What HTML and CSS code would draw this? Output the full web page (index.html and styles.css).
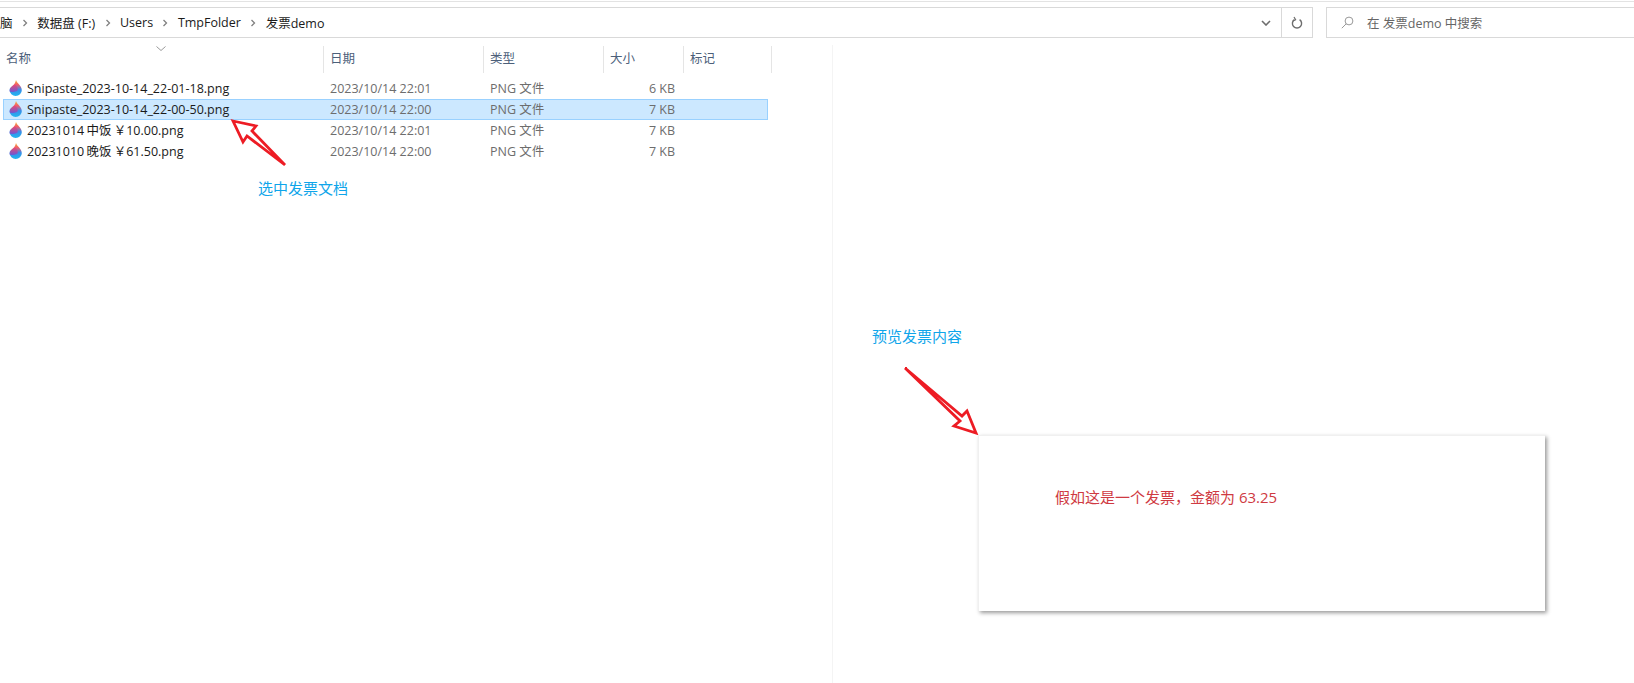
FILE: index.html
```html
<!DOCTYPE html>
<html lang="zh-CN">
<head>
  <meta charset="UTF-8">
  <title>发票demo</title>
  <link rel="stylesheet" href="styles.css">
</head>
<body>

  <div class="top-line"></div>

  <div class="toolbar">
    <div class="address-bar">
      <div class="crumbs">
        <span class="crumb crumb-cut">脑</span>
        <svg class="sep" viewBox="0 0 6 8"><path d="M1.5 1l3 3-3 3" /></svg>
        <span class="crumb">数据盘 (F:)</span>
        <svg class="sep" viewBox="0 0 6 8"><path d="M1.5 1l3 3-3 3" /></svg>
        <span class="crumb">Users</span>
        <svg class="sep" viewBox="0 0 6 8"><path d="M1.5 1l3 3-3 3" /></svg>
        <span class="crumb">TmpFolder</span>
        <svg class="sep" viewBox="0 0 6 8"><path d="M1.5 1l3 3-3 3" /></svg>
        <span class="crumb">发票demo</span>
      </div>
      <div class="bar-btn dropdown-btn">
        <svg width="10" height="6" viewBox="0 0 10 6"><path d="M1 1l4 4 4-4" fill="none" stroke="#6d6d6d" stroke-width="1.6" /></svg>
      </div>
      <div class="bar-btn refresh-btn">
        <svg width="12" height="14" viewBox="0 0 12 14"><path d="M3.4 3.6A4.6 4.6 0 1 0 8.6 3.6" fill="none" stroke="#6d6d6d" stroke-width="1.4" /><path d="M3 1l1.6 2.8L2 5" fill="none" stroke="#6d6d6d" stroke-width="1.2" /></svg>
      </div>
    </div>
    <div class="search-box">
      <svg class="search-icon" width="13" height="13" viewBox="0 0 13 13"><circle cx="8" cy="5" r="3.9" fill="none" stroke="#999" /><path d="M5.2 7.8L.8 12.2" stroke="#999" /></svg>
      <span>在 发票demo 中搜索</span>
    </div>
  </div>

  <div class="file-pane">
    <div class="sort-arrow">
      <svg width="10" height="5" viewBox="0 0 10 5"><path d="M.5.5L5 4.5 9.5.5" fill="none" stroke="#999" /></svg>
    </div>
    <div class="file-head">
      <div class="head-cell">名称</div>
      <div class="head-cell">日期</div>
      <div class="head-cell">类型</div>
      <div class="head-cell">大小</div>
      <div class="head-cell">标记</div>
    </div>

    <div class="file-list">
      <div class="file-row">
        <div class="file-name"><svg class="file-icon" viewBox="0 0 13 16"><use href="#drop" /></svg>Snipaste_2023-10-14_22-01-18.png</div>
        <div class="file-meta">2023/10/14 22:01</div>
        <div class="file-meta">PNG 文件</div>
        <div class="file-meta file-size">6 KB</div>
      </div>
      <div class="file-row selected">
        <div class="file-name"><svg class="file-icon" viewBox="0 0 13 16"><use href="#drop" /></svg>Snipaste_2023-10-14_22-00-50.png</div>
        <div class="file-meta">2023/10/14 22:00</div>
        <div class="file-meta">PNG 文件</div>
        <div class="file-meta file-size">7 KB</div>
      </div>
      <div class="file-row">
        <div class="file-name"><svg class="file-icon" viewBox="0 0 13 16"><use href="#drop" /></svg>20231014 中饭 ￥10.00.png</div>
        <div class="file-meta">2023/10/14 22:01</div>
        <div class="file-meta">PNG 文件</div>
        <div class="file-meta file-size">7 KB</div>
      </div>
      <div class="file-row">
        <div class="file-name"><svg class="file-icon" viewBox="0 0 13 16"><use href="#drop" /></svg>20231010 晚饭 ￥61.50.png</div>
        <div class="file-meta">2023/10/14 22:00</div>
        <div class="file-meta">PNG 文件</div>
        <div class="file-meta file-size">7 KB</div>
      </div>
    </div>
  </div>

  <!-- 预览区分隔线 -->
  <div class="preview-line"></div>

  <!-- 标注 -->
  <div class="note note-select">选中发票文档</div>
  <div class="note note-preview">预览发票内容</div>

  <svg class="arrows" width="1634" height="683" viewBox="0 0 1634 683">
    <path d="M233 121L256 126 252 131 285 165 247 136 243 142Z" />
    <path d="M905 368L962 416 967 411 976 433 954 426 960 421Z" />
  </svg>

  <div class="invoice">
    <p class="invoice-text">假如这是一个发票，金额为 63.25</p>
  </div>

  <svg class="defs" width="0" height="0">
    <defs>
      <linearGradient id="dropBlue" x1="0" y1="0" x2="0" y2="1">
        <stop offset="0" stop-color="#f7b42c" />
        <stop offset=".3" stop-color="#f05a6e" />
        <stop offset=".6" stop-color="#3b8ee8" />
        <stop offset="1" stop-color="#1fb6f0" />
      </linearGradient>
      <linearGradient id="dropPink" x1="0" y1="0" x2="0" y2="1">
        <stop offset="0" stop-color="#f2476f" />
        <stop offset="1" stop-color="#6a5ad6" />
      </linearGradient>
      <symbol id="drop" viewBox="0 0 13 16">
        <path d="M7 0C7.500 3 12.800 5.500 12.800 10.200A6.100 5.800 0 0 1 .6 10.200C.6 6.800 4.500 5.800 5.500 3.800 6.200 2.800 6.700 1.500 7 0Z" fill="url(#dropBlue)" />
        <path d="M5.800 4.200C8 6 9.500 8.500 8.500 10.500 6.500 12 3 12.500 .7 11.500.2 7.500 4.500 6 5.800 4.200Z" fill="url(#dropPink)" />
      </symbol>
    </defs>
  </svg>

</body>
</html>
```

FILE: styles.css
```css
* {
  box-sizing: border-box;
}
html, body {
  height: 100%;
}
body {
  position: relative;
  margin: 0;
  overflow: hidden;
  background-color: #fff;
  color: #1a1a1a;
  font-family: "Open Sans", "Noto Sans CJK SC", sans-serif;
  font-size: 12.5px;
}
.top-line {
  height: 1px;
  margin-top: 1px;
  background-color: #e3e3e3;
}
.toolbar {
  display: flex;
  gap: 13px;
  height: 31px;
  margin-top: 5px;
}
.address-bar {
  display: flex;
  width: 1313px;
  border: 1px solid #d9d9d9;
  border-left: none;
}
.crumbs {
  display: flex;
  flex: 1;
  align-items: center;
}
.crumb {
  white-space: nowrap;
}
.sep {
  width: 6px;
  height: 8px;
  margin: 0 9.4px;
}
.sep path {
  fill: none;
  stroke: #808080;
  stroke-width: 1.3;
}
.bar-btn {
  display: flex;
  align-items: center;
  justify-content: center;
}
.dropdown-btn {
  width: 32px;
  border-right: 1px solid #d9d9d9;
}
.refresh-btn {
  width: 30px;
}
.search-box {
  display: flex;
  flex: 1;
  align-items: center;
  gap: 13px;
  padding-left: 14px;
  border: 1px solid #d9d9d9;
  border-right: none;
  color: #666;
}
.file-pane {
  position: relative;
  width: 772px;
  margin-top: 8px;
}
.sort-arrow {
  position: absolute;
  top: 0;
  left: 156px;
  line-height: 0;
}
.file-head {
  display: grid;
  grid-template-columns: 324px 160px 120px 80px 88px;
  height: 27px;
}
.head-cell {
  padding: 3px 0 0 6px;
  border-right: 1px solid #e5e5e5;
  color: #4c607a;
  line-height: 20px;
}
.file-list {
  margin-top: 5px;
}
.file-row {
  display: grid;
  grid-template-columns: 320px 160px 120px 80px 85px;
  width: 765px;
  height: 21px;
  margin-left: 3px;
  border: 1px solid transparent;
  line-height: 19px;
}
.file-row.selected {
  border-color: #99d1ff;
  background-color: #cce8ff;
}
.file-name {
  display: flex;
  align-items: center;
  word-spacing: -1px;
  white-space: nowrap;
}
.file-icon {
  width: 13px;
  height: 16px;
  margin: -2px 5px 0 5px;
}
.file-meta {
  padding-left: 6px;
  color: #6d6d6d;
}
.file-size {
  width: 72px;
  padding: 0 1px 0 0;
  text-align: right;
}
.preview-line {
  position: absolute;
  top: 45px;
  bottom: 0;
  left: 832px;
  width: 1px;
  background-color: #f4f4f4;
}
.note {
  position: absolute;
  color: #0ea5ea;
  font-size: 15px;
  line-height: 20px;
}
.note-select {
  top: 178px;
  left: 258px;
}
.note-preview {
  top: 326px;
  left: 872px;
}
.arrows {
  position: absolute;
  top: 0;
  left: 0;
  pointer-events: none;
}
.arrows path {
  fill: #fff;
  stroke: #ed1c24;
  stroke-width: 2.8;
  stroke-linejoin: miter;
}
.invoice {
  position: absolute;
  top: 435px;
  left: 978px;
  width: 567px;
  height: 176px;
  border-top: 1px solid #f0f0f0;
  border-left: 1px solid #f0f0f0;
  background-color: #fff;
  box-shadow: 2px 2px 4px rgba(0, 0, 0, .4);
}
.invoice-text {
  margin: 51px 0 0 76px;
  color: #cf3a42;
  font-size: 15px;
  line-height: 20px;
}
.defs {
  position: absolute;
}
```
